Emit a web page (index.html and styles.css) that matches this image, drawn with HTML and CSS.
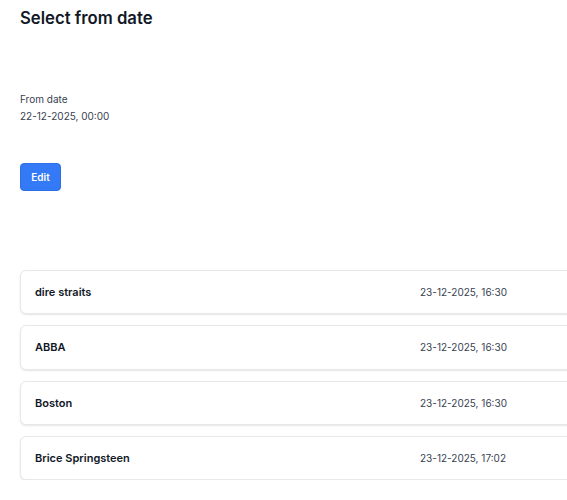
FILE: index.html
```html
<!DOCTYPE html>
<html lang="en">
<head>
  <meta charset="UTF-8">
  <meta name="viewport" content="width=device-width, initial-scale=1.0">
  <title>Select from date</title>
  <link rel="stylesheet" href="styles.css">
</head>
<body>
  <div class="page">
    <h1>Select from date</h1>

    <div class="from-date">
      <div class="label">From date</div>
      <div class="value">22-12-2025, 00:00</div>
    </div>

    <button class="edit-button">Edit</button>

    <div class="list">
      <div class="item"><span class="name">dire straits</span><span class="date">23-12-2025, 16:30</span></div>
      <div class="item"><span class="name">ABBA</span><span class="date">23-12-2025, 16:30</span></div>
      <div class="item"><span class="name">Boston</span><span class="date">23-12-2025, 16:30</span></div>
      <div class="item"><span class="name">Brice Springsteen</span><span class="date">23-12-2025, 17:02</span></div>
    </div>
  </div>
</body>
</html>
```

FILE: styles.css
```css
html {
  overflow: hidden;
}
body {
  font-family: Inter, "Noto Sans", sans-serif;
  background: #ffffff;
  color: #111827;
  margin: 0;
}
.page {
  padding: 5px 20px 0;
}
h1 {
  font-size: 16.7px;
  font-weight: 600;
  line-height: 27px;
  margin: 0;
  color: #111827;
}
.from-date {
  margin-top: 59px;
  font-size: 10px;
  line-height: 16.5px;
  color: #374151;
}
.edit-button {
  display: block;
  margin-top: 39px;
  width: 41px;
  height: 28px;
  padding: 0;
  font-family: inherit;
  font-size: 10px;
  font-weight: 600;
  color: #fff;
  background-color: #3479f6;
  border: 1px solid #2d6fe6;
  border-radius: 4px;
  cursor: pointer;
}
.list {
  margin-top: 79px;
  display: flex;
  flex-direction: column;
  gap: 11px;
}
.item {
  display: flex;
  align-items: center;
  box-sizing: border-box;
  width: 620px;
  height: 44.3px;
  padding: 0 14px;
  background: #fff;
  border: 1px solid #e7e8eb;
  border-radius: 6px;
  box-shadow: 0 1px 2px rgba(0, 0, 0, 0.1);
}
.item .name {
  flex: 0 0 385px;
  font-size: 11px;
  font-weight: 600;
  color: #111827;
}
.item .date {
  font-size: 10px;
  color: #374151;
}
```
